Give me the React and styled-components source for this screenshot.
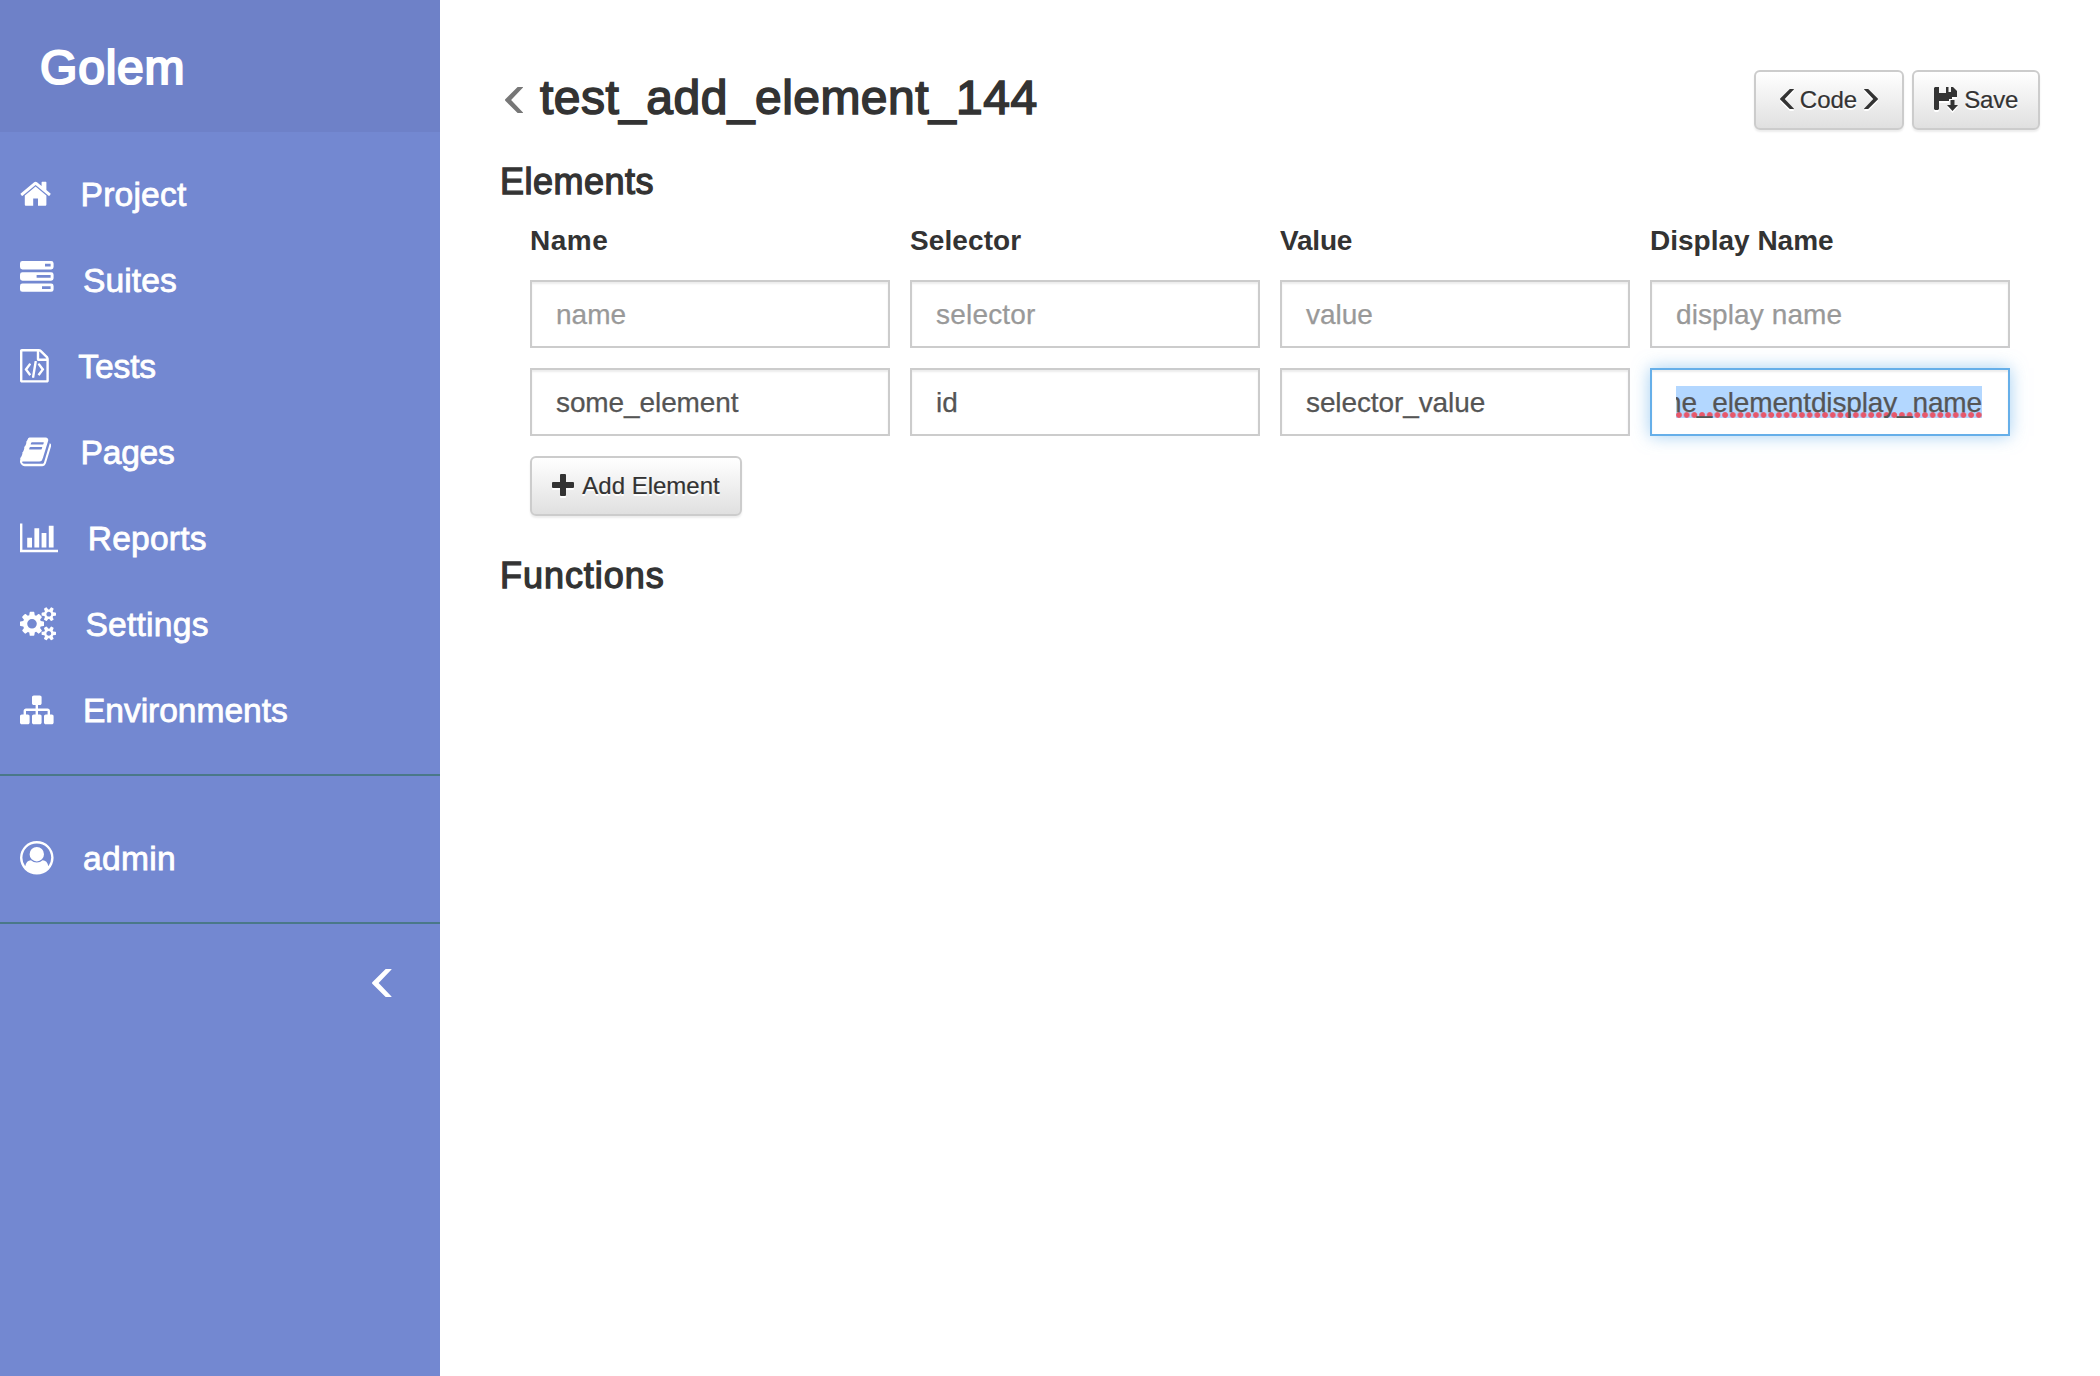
import React from 'react';
import styled, { createGlobalStyle } from 'styled-components';

const GlobalStyle = createGlobalStyle`
  *, *::before, *::after { box-sizing: border-box; }
  body {
    margin: 0;
    background: #fff;
    color: #333;
    font-family: "Liberation Sans", Arial, sans-serif;
    font-size: 28px;
    line-height: 40px;
  }
`;

const Page = styled.div`
  display: flex;
  min-height: 1376px;
`;

const Sidebar = styled.nav`
  flex: 0 0 440px;
  display: flex;
  flex-direction: column;
  background: #7388d1;
  color: #fff;
`;

const Brand = styled.div`
  height: 132px;
  padding: 41px 40px 0;
  background: #6e81c8;
  font-size: 48px;
  line-height: 53px;
  letter-spacing: 0.8px;
  -webkit-text-stroke: 2.2px #fff;
`;

const NavList = styled.ul`
  list-style: none;
  margin: 0;
  padding: ${(p) => p.$pad};
  border-bottom: 2px solid #4a7888;
`;

const NavItem = styled.li`
  display: flex;
  align-items: center;
  height: 86px;
  padding-left: 20px;
  font-size: 33.6px;
  letter-spacing: ${(p) => p.$spacing || 0}px;
  -webkit-text-stroke: 0.8px #fff;
`;

const NavLabel = styled.span`
  padding-top: 1px;
`;

const NavGlyph = styled.svg`
  flex: none;
  width: ${(p) => p.$w}px;
  height: 33.6px;
  margin-right: 29.4px;
  margin-top: ${(p) => p.$shift || 0}px;
  fill: currentColor;
`;

const Collapse = styled.div`
  display: flex;
  justify-content: flex-end;
  padding: 45px 49px 0 0;
`;

const Chevron = styled.svg`
  flex: none;
  display: block;
  width: ${(p) => p.$w}px;
  height: ${(p) => p.$h}px;
  fill: currentColor;
  overflow: visible;
  transform: ${(p) => (p.$flip ? 'scaleX(-1)' : 'none')};
`;

const Main = styled.main`
  flex: 1;
  min-width: 0;
  padding: 70px 60px 0;
`;

const Header = styled.header`
  display: flex;
  justify-content: space-between;
  height: 92px;
`;

const Title = styled.h3`
  display: flex;
  align-items: flex-start;
  margin: 0;
  padding: 1px 0 0 5px;
  font-size: 48px;
  font-weight: 400;
  line-height: 53px;
  letter-spacing: 0.46px;
  -webkit-text-stroke: 1.6px #333;
`;

const BackLink = styled.span`
  padding: 16px 17px 0 0;
  color: #777;
`;

const Actions = styled.div`
  display: flex;
  align-items: flex-start;
  gap: 8px;
`;

const Button = styled.button`
  display: flex;
  align-items: center;
  justify-content: center;
  width: ${(p) => p.$w}px;
  height: 60px;
  padding: 0;
  border: 2px solid #ccc;
  border-radius: 6px;
  background: linear-gradient(to bottom, #fff 0%, #e0e0e0 100%);
  box-shadow: inset 0 2px 0 rgba(255, 255, 255, 0.15), 0 2px 2px rgba(0, 0, 0, 0.075);
  color: #333;
  font-family: inherit;
  font-size: 24px;
  letter-spacing: ${(p) => p.$spacing || 0}px;
  text-shadow: 0 2px 0 #fff;
  -webkit-text-stroke: 0.2px #333;

  svg {
    margin-bottom: 3px;
    filter: drop-shadow(0 2px 0 #fff);
  }
`;

const ButtonIcon = styled.svg`
  flex: none;
  width: ${(p) => p.$w}px;
  height: ${(p) => p.$h}px;
  margin-right: ${(p) => p.$gap}px;
  fill: currentColor;
`;

const CodeLabel = styled.span`
  padding: 0 7px 0 6px;
`;

const SectionTitle = styled.h4`
  margin: 0;
  font-size: 36px;
  font-weight: 400;
  line-height: 40px;
  letter-spacing: ${(p) => p.$spacing || 0}px;
  -webkit-text-stroke: 1.3px #333;
`;

const Elements = styled.div`
  padding: 18px 30px 0;
`;

const Row = styled.div`
  display: grid;
  grid-template-columns: 360px 350px 350px 360px;
  column-gap: 20px;
  margin-bottom: 20px;
`;

const ColumnLabel = styled.div`
  height: 40px;
  padding-top: 1px;
  font-weight: 700;
  letter-spacing: ${(p) => p.$spacing || 0}px;
`;

const Field = styled.div`
  height: 68px;
  padding: 1px 24px 0;
  border: 2px solid ${(p) => (p.$focused ? '#66afe9' : '#ccc')};
  background: #fff;
  box-shadow: inset 0 2px 2px rgba(0, 0, 0, 0.075)
    ${(p) => (p.$focused ? ', 0 0 16px rgba(102, 175, 233, 0.6)' : '')};
  color: ${(p) => (p.$placeholder ? '#999' : '#555')};
  line-height: 64px;
  letter-spacing: ${(p) => p.$spacing || 0}px;
  white-space: nowrap;
  -webkit-text-stroke: 0.25px currentColor;
`;

const Selection = styled.span`
  display: flex;
  justify-content: flex-end;
  align-items: flex-start;
  height: 32px;
  margin: 15px 2px 0 0;
  overflow: hidden;
  background:
    radial-gradient(circle at 3px 3px, rgba(240, 65, 80, 0.85) 2.4px, transparent 3.4px) 0 26px / 7.7px 6px repeat-x,
    #b3d7ff;
  line-height: 34px;
`;

const FunctionsBlock = styled.section`
  padding-top: 40px;
`;

const MenuLeft = (props) => (
  <Chevron viewBox="0 0 20 28" preserveAspectRatio="none" {...props}>
    <path d="M14 0H20V.5L6.8 14 20 27.5V28H14L.3 14.7Q-.3 14 .3 13.3Z" />
  </Chevron>
);

const HOME = 'M1472 992v480q0 26-19 45t-45 19h-384v-384h-256v384h-384q-26 0-45-19t-19-45v-480q0-1 .5-3t.5-3l575-474 575 474q1 2 1 6zm223-69l-62 74q-8 9-21 11h-3q-13 0-21-7l-692-577-692 577q-12 8-24 7-13-2-21-11l-62-74q-8-10-7-23.5t11-21.5l719-599q32-26 76-26t76 26l244 204v-195q0-14 9-23t23-9h192q14 0 23 9t9 23v408l219 182q10 8 11 21.5t-7 23.5z';
const FILE_CODE = 'M1596 380q28 28 48 76t20 88v1152q0 40-28 68t-68 28h-1344q-40 0-68-28t-28-68v-1600q0-40 28-68t68-28h896q40 0 88 20t76 48zm-444-244v376h376q-10-29-22-41l-313-313q-12-12-41-22zm384 1528v-1024h-416q-40 0-68-28t-28-68v-416h-768v1536h1280zm-928-896q8-11 21-12.5t24 6.5l51 38q11 8 12.5 21t-6.5 24l-182 243 182 243q8 11 6.5 24t-12.5 21l-51 38q-11 8-24 6.5t-21-12.5l-226-301q-14-19 0-38zm802 301q14 19 0 38l-226 301q-8 11-21 12.5t-24-6.5l-51-38q-11-8-12.5-21t6.5-24l182-243-182-243q-8-11-6.5-24t12.5-21l51-38q11-8 24-6.5t21 12.5zm-620 461q-13-2-20.5-13t-5.5-24l138-831q2-13 13-20.5t24-5.5l63 10q13 2 20.5 13t5.5 24l-138 831q-2 13-13 20.5t-24 5.5z';
const BOOK = 'M1703 478q40 57 18 129l-275 906q-19 64-76.5 107.5t-122.5 43.5h-923q-77 0-148.5-53.5t-99.5-131.5q-24-67-2-127 0-4 3-27t4-37q1-8-3-21.5t-3-19.5q2-11 8-21t16.5-23.5 16.5-23.5q23-38 45-91.5t30-91.5q3-10 .5-30t-.5-28q3-11 17-28t17-23q21-36 42-92t25-90q1-9-2.5-32t.5-28q4-13 22-30.5t22-22.5q19-26 42.5-84.5t27.5-96.5q1-8-3-25.5t-2-26.5q2-8 9-18t18-23 17-21q8-12 16.5-30.5t15-35 16-36 19.5-32 26.5-23.5 36-11.5 47.5 5.5l-1 3q38-9 51-9h761q74 0 114 56t18 130l-274 906q-36 119-71.5 153.5t-128.5 34.5h-869q-27 0-38 15-11 16-1 43 24 70 144 70h923q29 0 56-15.5t35-41.5l300-987q7-22 5-57 38 15 59 43zm-1064 2q-4 13 2 22.5t20 9.5h608q13 0 25.5-9.5t16.5-22.5l21-64q4-13-2-22.5t-20-9.5h-608q-13 0-25.5 9.5t-16.5 22.5zm-83 256q-4 13 2 22.5t20 9.5h608q13 0 25.5-9.5t16.5-22.5l21-64q4-13-2-22.5t-20-9.5h-608q-13 0-25.5 9.5t-16.5 22.5z';
const BAR_CHART = 'M640 896v512h-256v-512h256zm384-512v1024h-256v-1024h256zm1024 1152v128h-2048v-1536h128v1408h1920zm-640-896v768h-256v-768h256zm384-384v1152h-256v-1152h256z';
const COGS = 'M896 896q0-106-75-181t-181-75-181 75-75 181 75 181 181 75 181-75 75-181zm768 512q0-52-38-90t-90-38-90 38-38 90q0 53 37.5 90.5t90.5 37.5 90.5-37.5 37.5-90.5zm0-1024q0-52-38-90t-90-38-90 38-38 90q0 53 37.5 90.5t90.5 37.5 90.5-37.5 37.5-90.5zm-384 421v185q0 10-7 19.5t-16 10.5l-155 24q-11 35-32 76 34 48 90 115 7 11 7 20 0 12-7 19-23 30-82.5 89.5t-78.5 59.5q-11 0-21-7l-115-90q-37 19-77 31-11 108-23 155-7 24-30 24h-186q-11 0-20-7.5t-10-17.5l-23-153q-34-10-75-31l-118 89q-7 7-20 7-11 0-21-8-144-133-144-160 0-9 7-19 10-14 41-53t47-61q-23-44-35-82l-152-24q-10-1-17-9.5t-7-19.5v-185q0-10 7-19.5t16-10.5l155-24q11-35 32-76-34-48-90-115-7-11-7-20 0-12 7-20 22-30 82-89t79-59q11 0 21 7l115 90q34-18 77-32 11-108 23-154 7-24 30-24h186q11 0 20 7.5t10 17.5l23 153q34 10 75 31l118-89q8-7 20-7 11 0 21 8 144 133 144 160 0 8-7 19-12 16-42 54t-45 60q23 48 34 82l152 23q10 2 17 10.5t7 19.5zm640 533v140q0 16-149 31-12 27-30 52 51 113 51 138 0 4-4 7-122 71-124 71-8 0-46-47t-52-68q-20 2-30 2t-30-2q-14 21-52 68t-46 47q-2 0-124-71-4-3-4-7 0-25 51-138-18-25-30-52-149-15-149-31v-140q0-16 149-31 13-29 30-52-51-113-51-138 0-4 4-7 4-2 35-20t59-34 30-16q8 0 46 46.5t52 67.5q20-2 30-2t30 2q51-71 92-112l6-2q4 0 124 70 4 3 4 7 0 25-51 138 17 23 30 52 149 15 149 31zm0-1024v140q0 16-149 31-12 27-30 52 51 113 51 138 0 4-4 7-122 71-124 71-8 0-46-47t-52-68q-20 2-30 2t-30-2q-14 21-52 68t-46 47q-2 0-124-71-4-3-4-7 0-25 51-138-18-25-30-52-149-15-149-31v-140q0-16 149-31 13-29 30-52-51-113-51-138 0-4 4-7 4-2 35-20t59-34 30-16q8 0 46 46.5t52 67.5q20-2 30-2t30 2q51-71 92-112l6-2q4 0 124 70 4 3 4 7 0 25-51 138 17 23 30 52 149 15 149 31z';
const SITEMAP = 'M1792 1248v320q0 40-28 68t-68 28h-320q-40 0-68-28t-28-68v-320q0-40 28-68t68-28h96v-192h-512v192h96q40 0 68 28t28 68v320q0 40-28 68t-68 28h-320q-40 0-68-28t-28-68v-320q0-40 28-68t68-28h96v-192h-512v192h96q40 0 68 28t28 68v320q0 40-28 68t-68 28h-320q-40 0-68-28t-28-68v-320q0-40 28-68t68-28h96v-192q0-52 38-90t90-38h512v-192h-96q-40 0-68-28t-28-68v-320q0-40 28-68t68-28h320q40 0 68 28t28 68v320q0 40-28 68t-68 28h-96v192h512q52 0 90 38t38 90v192h96q40 0 68 28t28 68z';
const USER = 'M896 0q182 0 348 71t286 191 191 286 71 348q0 181-70.5 347t-190.5 286-286 191.5-349 71.5-349-71-285.5-191.5-190.5-286-71-347.5 71-348 191-286 286-191 348-71zm619 1351q149-205 149-455 0-156-61-298t-164-245-245-164-298-61-298 61-245 164-164 245-61 298q0 250 149 455 66-327 306-327 131 128 313 128t313-128q240 0 306 327zm-235-647q0-159-112.5-271.5t-271.5-112.5-271.5 112.5-112.5 271.5 112.5 271.5 271.5 112.5 271.5-112.5 112.5-271.5z';
const TASKS = 'M130 0H1670a130 130 0 0 1 130 130V320a130 130 0 0 1-130 130H130A130 130 0 0 1 0 320V130A130 130 0 0 1 130 0ZM1340 150V290H1640V150ZM130 600H1670a130 130 0 0 1 130 130V920a130 130 0 0 1-130 130H130A130 130 0 0 1 0 920V730A130 130 0 0 1 130 600ZM890 750V890H1640V750ZM130 1200H1670a130 130 0 0 1 130 130V1520a130 130 0 0 1-130 130H130A130 130 0 0 1 0 1520V1330A130 130 0 0 1 130 1200ZM1180 1350V1490H1640V1350Z';

const NAV = [
  { label: 'Project', path: HOME, box: '64 0 1664 1792', w: 31.2, spacing: 0.2 },
  { label: 'Suites', path: TASKS, box: '0 0 1800 1792', w: 33.6, shift: -5, spacing: 0.1 },
  { label: 'Tests', path: FILE_CODE, box: '128 0 1536 1792', w: 28.8, spacing: -0.1 },
  { label: 'Pages', path: BOOK, box: '64 0 1664 1792', w: 31.2, spacing: -0.25 },
  { label: 'Reports', path: BAR_CHART, box: '0 0 2048 1792', w: 38.4, spacing: 0.2 },
  { label: 'Settings', path: COGS, box: '0 0 1920 1792', w: 36, spacing: 0.25 },
  { label: 'Environments', path: SITEMAP, box: '0 0 1792 1792', w: 33.6, spacing: -0.05 },
];

const ADMIN = { label: 'admin', path: USER, box: '0 0 1792 1792', w: 33.6, spacing: 0.3 };

const NavEntry = ({ item }) => (
  <NavItem $spacing={item.spacing}>
    <NavGlyph viewBox={item.box} $w={item.w} $shift={item.shift}>
      <path fillRule="evenodd" d={item.path} />
    </NavGlyph>
    <NavLabel>{item.label}</NavLabel>
  </NavItem>
);

export default function App() {
  return (
    <>
      <GlobalStyle />
      <Page>
        <Sidebar>
          <Brand>Golem</Brand>
          <NavList $pad="19px 0 21px">
            {NAV.map((item) => (
              <NavEntry key={item.label} item={item} />
            ))}
          </NavList>
          <NavList $pad="39px 0 21px">
            <NavEntry item={ADMIN} />
          </NavList>
          <Collapse>
            <MenuLeft $w={19.5} $h={28} />
          </Collapse>
        </Sidebar>
        <Main>
          <Header>
            <Title>
              <BackLink>
                <MenuLeft $w={18} $h={26} />
              </BackLink>
              test_add_element_144
            </Title>
            <Actions>
              <Button $w={150}>
                <MenuLeft $w={14} $h={20} />
                <CodeLabel>Code</CodeLabel>
                <MenuLeft $w={14} $h={20} $flip />
              </Button>
              <Button $w={128} $spacing={-0.2}>
                <ButtonIcon viewBox="0 0 24 24" $w={24} $h={24} $gap={6.5}>
                  <path d="M1 0H5V6H12V0H14.5V5H17V0H19L23 4V10H18V12H15V14H5V22L4 23H1L0 22V1Z" />
                  <path d="M16.5 13H20.5V18H24L18.5 24 13 18H16.5Z" />
                </ButtonIcon>
                Save
              </Button>
            </Actions>
          </Header>
          <SectionTitle $spacing={0.5}>Elements</SectionTitle>
          <Elements>
            <Row>
              <ColumnLabel $spacing={0.5}>Name</ColumnLabel>
              <ColumnLabel $spacing={0.1}>Selector</ColumnLabel>
              <ColumnLabel $spacing={-0.2}>Value</ColumnLabel>
              <ColumnLabel>Display Name</ColumnLabel>
            </Row>
            <Row>
              <Field $placeholder>name</Field>
              <Field $placeholder $spacing={0.2}>selector</Field>
              <Field $placeholder>value</Field>
              <Field $placeholder $spacing={0.1}>display name</Field>
            </Row>
            <Row>
              <Field $spacing={-0.1}>some_element</Field>
              <Field>id</Field>
              <Field $spacing={-0.1}>selector_value</Field>
              <Field $focused $spacing={-0.14}>
                <Selection>some_elementdisplay_name</Selection>
              </Field>
            </Row>
            <Button $w={212}>
              <ButtonIcon viewBox="0 0 22 22" $w={22} $h={22} $gap={8}>
                <path d="M9 0H13Q14 0 14 1V8H21Q22 8 22 9V13Q22 14 21 14H14V21Q14 22 13 22H9Q8 22 8 21V14H1Q0 14 0 13V9Q0 8 1 8H8V1Q8 0 9 0Z" />
              </ButtonIcon>
              Add Element
            </Button>
          </Elements>
          <FunctionsBlock>
            <SectionTitle $spacing={0.95}>Functions</SectionTitle>
          </FunctionsBlock>
        </Main>
      </Page>
    </>
  );
}
